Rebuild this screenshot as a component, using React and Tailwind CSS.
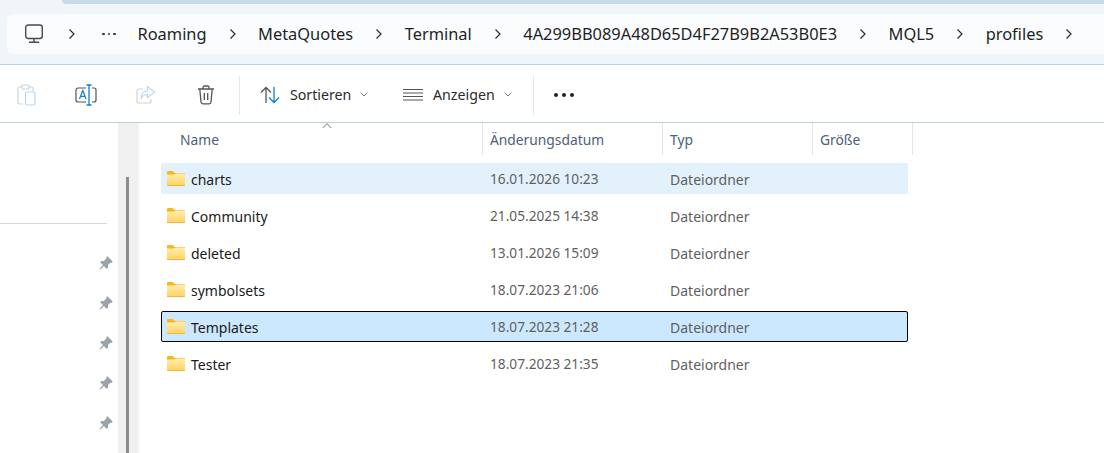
const crumbs = ['Roaming', 'MetaQuotes', 'Terminal', '4A299BB089A48D65D4F27B9B2A53B0E3', 'MQL5', 'profiles'];

const files = [
  { name: 'charts', date: '16.01.2026 10:23', state: 'hover' },
  { name: 'Community', date: '21.05.2025 14:38' },
  { name: 'deleted', date: '13.01.2026 15:09' },
  { name: 'symbolsets', date: '18.07.2023 21:06' },
  { name: 'Templates', date: '18.07.2023 21:28', state: 'selected' },
  { name: 'Tester', date: '18.07.2023 21:35' },
];

function Chevron() {
  return (
    <svg width="8" height="12" viewBox="0 0 8 12" fill="none" stroke="#2b2b2b" strokeWidth="1.2" className="shrink-0">
      <path d="M1.5 1.5 6 6l-4.500 4.500" />
    </svg>
  );
}

function SmallCaret() {
  return (
    <svg width="8" height="5" viewBox="0 0 8 5" fill="none" stroke="#777" strokeWidth="1" className="shrink-0">
      <path d="M.7 .7 4 4 7.300 .7" />
    </svg>
  );
}

function Computer() {
  return (
    <svg width="20" height="20" viewBox="0 0 20 20" fill="none" stroke="#4a4a4a" strokeWidth="1.4" className="shrink-0">
      <rect x="1.700" y="1" width="16.600" height="13.500" rx="2.500" />
      <path d="M10 14.500v3.500M5 18.300h10" />
    </svg>
  );
}

function Folder() {
  return (
    <svg width="18" height="15" viewBox="0 0 18 15" className="shrink-0">
      <defs>
        <linearGradient id="folderBody" x1="0" y1="0" x2="0" y2="1">
          <stop offset="0" stopColor="#ffeeb0" />
          <stop offset="1" stopColor="#ffd25e" />
        </linearGradient>
      </defs>
      <path d="M0 1a1 1 0 0 1 1-1h4.500l2 2H17a1 1 0 0 1 1 1v1H0z" fill="#fdb51a" />
      <path d="M0 3.500h7.500L9 2.500h8a1 1 0 0 1 1 1V14a1 1 0 0 1-1 1H1a1 1 0 0 1-1-1z" fill="url(#folderBody)" />
      <path d="M0 14h18v.3a.7.7 0 0 1-.7.7H.7a.7.7 0 0 1-.7-.7z" fill="#f3b63a" />
    </svg>
  );
}

function Pin() {
  return (
    <svg width="14" height="14" viewBox="0 0 14 14" fill="#9aa3ab">
      <path d="M8.400 .3 13.700 5.600 12.500 6.900 11.400 6.700 9 9.100 9 11.600 7.700 12.900 4.900 10 1.300 13.600 .4 12.700 4 9.100 1.100 6.300 2.400 5 4.900 5 7.300 2.600 7.100 1.500z" />
    </svg>
  );
}

function Separator() {
  return <div className="h-[39px] w-px bg-[#e6e9ec]" />;
}

function Toolbar() {
  return (
    <div className="flex h-[58px] items-center border-b border-[#bcd0e0] bg-white pt-[3px] text-[14px] text-[#2b2b2b]">
      <div className="ml-[17px] w-[49px]">
        <svg width="20" height="22" viewBox="0 0 20 22" fill="none" strokeWidth="1.200">
          <path d="M5 3H2.500A1.500 1.500 0 0 0 1 4.500v14A1.500 1.500 0 0 0 2.500 20H6" stroke="#d2d2d2" />
          <path d="M12 3h2.500A1.500 1.500 0 0 1 16 4.500V7" stroke="#d2d2d2" />
          <rect x="5" y="1" width="7" height="4" rx="1" stroke="#d2d2d2" />
          <rect x="8.500" y="8" width="9.500" height="13" rx="1.500" stroke="#b5d8f5" />
        </svg>
      </div>
      <div className="ml-[9px] w-[55px]">
        <svg width="22" height="22" viewBox="0 0 22 22" fill="none">
          <path d="M11 4H3a2 2 0 0 0-2 2v10a2 2 0 0 0 2 2h8" stroke="#555" strokeWidth="1.200" />
          <path d="M17 4h2a2 2 0 0 1 2 2v10a2 2 0 0 1-2 2h-2" stroke="#555" strokeWidth="1.200" />
          <path d="M14 1v20M11.500 1h5M11.500 21h5" stroke="#0f7fd6" strokeWidth="1.300" />
          <path d="M4.500 15 7.800 6.500 11 15M5.700 12.300h4.300" stroke="#0f7fd6" strokeWidth="1.200" />
        </svg>
      </div>
      <div className="ml-[6px] w-[53px]">
        <svg width="20" height="20" viewBox="0 0 20 20" fill="none" strokeWidth="1.200">
          <path d="M7 4H3a2 2 0 0 0-2 2v10a2 2 0 0 0 2 2h10a2 2 0 0 0 2-2v-2" stroke="#d2d2d2" />
          <path d="M11.500 1.500 18.500 7l-7 5.500V9.500C8 9.500 6 11 5 14c0-5 2.500-8 6.500-8z" stroke="#b5d8f5" />
        </svg>
      </div>
      <div className="ml-[8px] w-[42px]">
        <svg width="18" height="20" viewBox="0 0 18 20" fill="none" stroke="#555" strokeWidth="1.300">
          <path d="M1 4h16M6 4V2.500A1.500 1.500 0 0 1 7.500 1h3A1.500 1.500 0 0 1 12 2.500V4" />
          <path d="M2.800 4 4 17a2 2 0 0 0 2 1.800h6a2 2 0 0 0 2-1.800l1.200-13" />
          <path d="M7.300 8v7M10.700 8v7" />
        </svg>
      </div>
      <Separator />
      <div className="ml-5 flex items-center">
        <svg width="20" height="18" viewBox="0 0 20 18" fill="none" strokeWidth="1.300">
          <path d="M6 17V1.500M1 6.500l5-5 5 5" stroke="#555" />
          <path d="M14 1v15.500M9 11.500l5 5 5-5" stroke="#0f7fd6" />
        </svg>
        <span className="ml-[10px] w-[62px] whitespace-nowrap text-[14.2px]">Sortieren</span>
        <span className="ml-[8px]"><SmallCaret /></span>
      </div>
      <div className="ml-[35px] flex items-center">
        <svg width="20" height="14" viewBox="0 0 20 14" fill="none" stroke="#555" strokeWidth="1">
          <path d="M0 1.500h20M0 5h20M0 8.500h20M0 12h20" />
        </svg>
        <span className="ml-[10px] w-[63px] whitespace-nowrap text-[14.2px]">Anzeigen</span>
        <span className="ml-[8px]"><SmallCaret /></span>
      </div>
      <div className="ml-[21px]"><Separator /></div>
      <div className="ml-[20px] flex gap-[4px]">
        <span className="size-[4px] rounded-full bg-[#222]" />
        <span className="size-[4px] rounded-full bg-[#222]" />
        <span className="size-[4px] rounded-full bg-[#222]" />
      </div>
    </div>
  );
}

function AddressBar() {
  return (
    <div className="h-[65px] border-b border-[#bcd0e0] bg-[#f0f5f9]">
      <div className="ml-[62px] h-[4px] rounded-bl-md bg-[#c8dbe8]" />
      <div className="ml-[7px] mt-[10px] flex h-[40px] items-center rounded-l-md bg-[#fbfcfe] pl-[17px] text-[16.4px] text-[#1f1f1f]">
        <Computer />
        <span className="ml-[24px]"><Chevron /></span>
        <span className="ml-[26px] mr-[0.5px] flex gap-[3px]">
          <span className="size-[2.500px] rounded-full bg-[#333]" />
          <span className="size-[2.500px] rounded-full bg-[#333]" />
          <span className="size-[2.500px] rounded-full bg-[#333]" />
        </span>
        {crumbs.map((c) => (
          <div key={c} className="ml-[21.500px] flex items-center gap-[22px]">
            <span className="whitespace-nowrap">{c}</span>
            <Chevron />
          </div>
        ))}
      </div>
    </div>
  );
}

function Sidebar() {
  return (
    <aside className="flex w-[140px] shrink-0">
      <div className="w-[118px]">
        <div className="mt-[100px] h-px w-[107px] bg-[#d9d9d9]" />
        <div className="mt-[32px] flex flex-col items-end gap-[26px] pr-[5px]">
          {[0, 1, 2, 3, 4].map((i) => <Pin key={i} />)}
        </div>
      </div>
      <div className="w-[20px] bg-[#f0f0f0] pl-[8px] pt-[54px]">
        <div className="h-[300px] w-[3px] bg-[#8b8b8b]" />
      </div>
      <div className="w-[2px] bg-[#f8f8f8]" />
    </aside>
  );
}

function HeaderCell({ label, width, pad = 'pl-[7px]' }) {
  return (
    <div className={`${width} ${pad} flex h-[32px] items-center border-r border-[#e5e5e5] pt-[2px] whitespace-nowrap`}>
      {label}
    </div>
  );
}

function FileRow({ file }) {
  const tone = file.state === 'selected'
    ? 'border-black bg-[#cce8ff] rounded-[2px]'
    : file.state === 'hover'
      ? 'border-transparent bg-[#e3f1fc] rounded-[2px]'
      : 'border-transparent';
  return (
    <div className={`${tone} flex h-[31px] w-[747px] items-center border text-[14px]`}>
      <div className="flex w-[321px] items-center gap-[6px] pl-[5px] text-[#1a1a1a]">
        <Folder />
        <span className="pt-[2px]">{file.name}</span>
      </div>
      <div className="w-[180px] pl-[7px] pt-[2px] text-[13.7px] text-[#5f5f5f]">{file.date}</div>
      <div className="pl-[7px] pt-[2px] text-[#5f5f5f]">Dateiordner</div>
    </div>
  );
}

export default function App() {
  return (
    <div className="h-[453px] w-[1104px] overflow-hidden bg-white" style={{ fontFamily: '"Noto Sans", "Open Sans", sans-serif' }}>
      <AddressBar />
      <Toolbar />
      <div className="flex h-[330px]">
        <Sidebar />
        <main className="relative flex-1">
          <svg width="10" height="6" viewBox="0 0 10 6" fill="none" stroke="#777" className="absolute left-[182px] top-0">
            <path d="M.7 5 5 .7 9.300 5" />
          </svg>
          <div className="flex text-[13.8px] text-[#4c607a]">
            <HeaderCell label="Name" width="w-[343px]" pad="pl-[40px]" />
            <HeaderCell label="Änderungsdatum" width="w-[180px]" />
            <HeaderCell label="Typ" width="w-[150px]" />
            <HeaderCell label="Größe" width="w-[100px]" />
          </div>
          <div className="ml-[21px] mt-[8px] flex flex-col gap-[6px]">
            {files.map((f) => <FileRow key={f.name} file={f} />)}
          </div>
        </main>
      </div>
    </div>
  );
}
